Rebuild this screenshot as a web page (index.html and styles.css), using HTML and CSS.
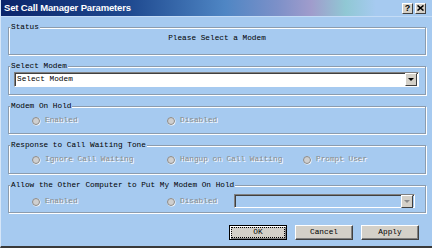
FILE: index.html
```html
<!DOCTYPE html>
<html>
<head>
<meta charset="utf-8">
<link rel="stylesheet" href="styles.css">
</head>
<body>
<div class="window">
  <div class="titlebar">
    <span class="title">Set Call Manager Parameters</span>
    <div class="tb-buttons">
      <span class="tb-btn help">?</span>
      <span class="tb-btn">
        <svg width="7" height="6" viewBox="0 0 7 6"><path d="M0.5 0.5 L6.5 5.5 M6.5 0.5 L0.5 5.5" stroke="#000" stroke-width="1.6" fill="none"/></svg>
      </span>
    </div>
  </div>
  <div class="body">
    <section class="group g-status">
      <span class="legend">Status</span>
      <div class="status-text">Please Select a Modem</div>
    </section>
    <section class="group g-select">
      <span class="legend">Select Modem</span>
      <div class="combo">
        <span class="combo-text">Select Modem</span>
        <span class="combo-btn"><span class="arrow"></span></span>
      </div>
    </section>
    <section class="group g-radio">
      <span class="legend">Modem On Hold</span>
      <div class="radios">
        <label class="radio"><span class="dot"></span>Enabled</label>
        <label class="radio"><span class="dot"></span>Disabled</label>
      </div>
    </section>
    <section class="group g-radio g-tall">
      <span class="legend">Response to Call Waiting Tone</span>
      <div class="radios">
        <label class="radio"><span class="dot"></span>Ignore Call Waiting</label>
        <label class="radio"><span class="dot"></span>Hangup on Call Waiting</label>
        <label class="radio"><span class="dot"></span>Prompt User</label>
      </div>
    </section>
    <section class="group g-radio g-allow">
      <span class="legend">Allow the Other Computer to Put My Modem On Hold</span>
      <div class="radios">
        <label class="radio"><span class="dot"></span>Enabled</label>
        <label class="radio r-short"><span class="dot"></span>Disabled</label>
        <div class="combo combo-disabled">
          <span class="combo-text"></span>
          <span class="combo-btn"><span class="arrow"></span></span>
        </div>
      </div>
    </section>
    <div class="buttons">
      <button class="btn default">OK</button>
      <button class="btn">Cancel</button>
      <button class="btn">Apply</button>
    </div>
  </div>
</div>
</body>
</html>
```
FILE: styles.css
```css
html, body {
  margin: 0;
  padding: 0;
}
body {
  width: 432px;
  height: 248px;
  overflow: hidden;
  background: #a6caf0;
  font-family: "Liberation Mono", "DejaVu Sans Mono", monospace;
  font-size: 7.75px;
  line-height: 9px;
  color: #000;
}
.window {
  height: 248px;
  box-sizing: border-box;
  border-left: 1px solid #d6e6f8;
  border-bottom: 2px solid #3a3a3a;
  display: flex;
  flex-direction: column;
}
.titlebar {
  height: 16px;
  flex: none;
  display: flex;
  align-items: center;
  justify-content: space-between;
  padding: 0 6px 0 3px;
  background: linear-gradient(90deg, #0a246a 0%, #1f4a90 30%, #4f86c4 52%, #7c90c8 64%, #a09ccc 72%, #90c8d4 80%, #a6caf0 87%, #a6caf0 100%);
  border-bottom: 1px solid #c4dcf6;
}
.title {
  color: #fff;
  font-family: "Liberation Sans", Arial, sans-serif;
  font-weight: bold;
  font-size: 9.5px;
  letter-spacing: -0.15px;
  line-height: 12px;
}
.tb-buttons {
  display: flex;
  gap: 2px;
}
.tb-btn {
  width: 9px;
  height: 9px;
  background: #d4d0c8;
  border-top: 1px solid #fff;
  border-left: 1px solid #fff;
  border-right: 1px solid #404040;
  border-bottom: 1px solid #404040;
  display: flex;
  align-items: center;
  justify-content: center;
  font-family: "Liberation Sans", Arial, sans-serif;
  font-weight: bold;
  font-size: 9px;
  line-height: 9px;
}
.body {
  flex: 1;
  display: flex;
  flex-direction: column;
  padding: 10px 6px 0 7px;
  gap: 11px;
}
.group {
  position: relative;
  box-sizing: border-box;
  border: 1px solid #8c9cae;
  box-shadow: inset 1px 1px 0 #fff, 1px 1px 0 #fff;
  height: 28px;
  flex: none;
}
.legend {
  position: absolute;
  top: -5px;
  left: 1px;
  padding: 0 1px;
  background: #a6caf0;
  white-space: nowrap;
}
.status-text {
  text-align: center;
  padding-top: 6px;
}
.g-select {
  height: 29px;
  padding: 5px 6px 0 5px;
}
.combo {
  height: 15px;
  box-sizing: border-box;
  background: #fff;
  border-top: 1px solid #808080;
  border-left: 1px solid #808080;
  border-right: 1px solid #fff;
  border-bottom: 1px solid #fff;
  box-shadow: inset 1px 1px 0 #404040;
  display: flex;
  align-items: center;
  justify-content: space-between;
  padding: 1px 1px 1px 2px;
}
.combo-btn {
  width: 10px;
  height: 11px;
  background: #d4d0c8;
  border-top: 1px solid #fff;
  border-left: 1px solid #fff;
  border-right: 1px solid #404040;
  border-bottom: 1px solid #404040;
  display: flex;
  align-items: center;
  justify-content: center;
}
.arrow {
  width: 0;
  height: 0;
  border-left: 3px solid transparent;
  border-right: 3px solid transparent;
  border-top: 3px solid #000;
}
.g-radio {
  padding: 9px 0 0 23px;
}
.g-tall {
  height: 29px;
}
.radios {
  display: grid;
  grid-template-columns: 135px 136px 1fr;
  align-items: center;
}
.g-allow .radios {
  grid-template-columns: 135px 67px 181px;
}
.radio {
  display: flex;
  align-items: center;
  gap: 5px;
  color: #8a8a8a;
  text-shadow: 1px 1px 0 #fff;
  white-space: nowrap;
}
.dot {
  width: 6px;
  height: 6px;
  border-radius: 50%;
  background: #cfcfcf;
  border: 1px solid #8a8a8a;
  box-shadow: 0.5px 0.5px 0 #fff;
  flex: none;
}
.g-allow .combo {
  margin-top: -1px;
  height: 14px;
}
.combo-disabled {
  background: #a6caf0;
}
.combo-disabled .arrow {
  border-top-color: #8a8a8a;
}
.buttons {
  display: flex;
  justify-content: flex-end;
  gap: 8px;
  padding-right: 7px;
  margin-top: 1px;
}
.btn {
  width: 58px;
  height: 15px;
  box-sizing: border-box;
  background: #d4d0c8;
  border-top: 1px solid #fff;
  border-left: 1px solid #fff;
  border-right: 1px solid #404040;
  border-bottom: 1px solid #404040;
  box-shadow: inset -1px -1px 0 #808080;
  font-family: "Liberation Mono", "DejaVu Sans Mono", monospace;
  font-size: 7.75px;
  line-height: 9px;
  color: #000;
  padding: 0;
}
.btn.default {
  border: 1px solid #000;
  box-shadow: inset 1px 1px 0 #fff, inset -1px -1px 0 #808080;
  outline: 1px dotted #000;
  outline-offset: -3px;
}
```
